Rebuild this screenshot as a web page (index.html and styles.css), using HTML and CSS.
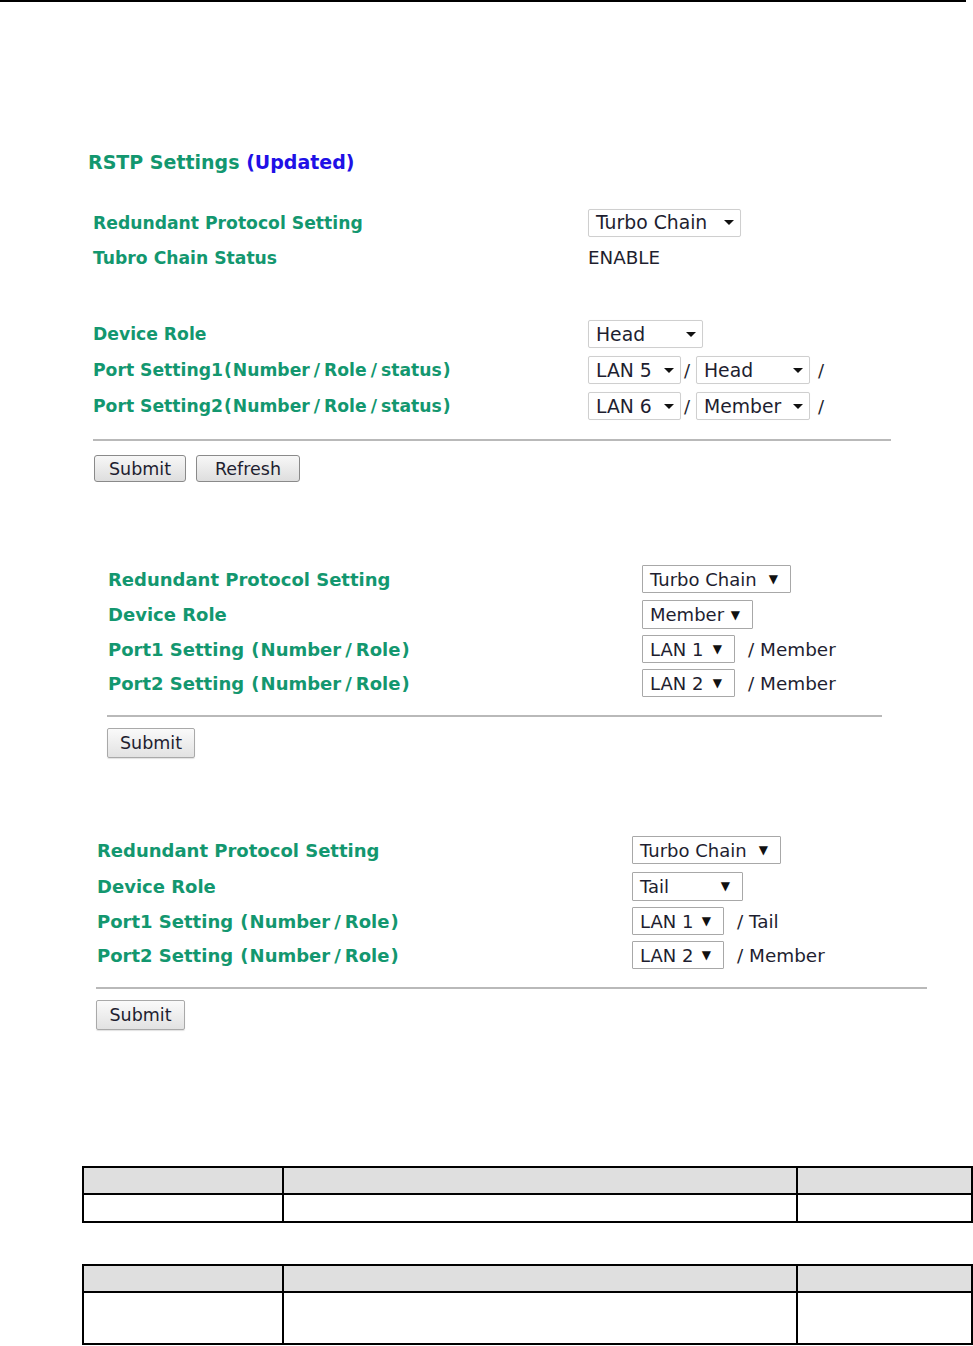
FILE: index.html
```html
<!DOCTYPE html>
<html>
<head>
<meta charset="utf-8">
<link rel="stylesheet" href="styles.css">
</head>
<body>
<div class="topline"></div>

<section class="s1">
  <h2 class="title">RSTP Settings <span class="upd">(Updated)</span></h2>
  <div class="grid g1">
    <div class="lbl">Redundant Protocol Setting</div>
    <div class="val"><span class="sel a w153">Turbo Chain<i class="caret"></i></span></div>
    <div class="lbl">Tubro Chain Status</div>
    <div class="val"><span class="plain">ENABLE</span></div>
    <div class="spacer"></div>
    <div class="spacer"></div>
    <div class="lbl">Device Role</div>
    <div class="val"><span class="sel a w115">Head<i class="caret"></i></span></div>
    <div class="lbl">Port Setting1<span class="pn">(</span>Number<span class="sl">/</span>Role<span class="sl">/</span>status<span class="pn">)</span></div>
    <div class="val"><span class="sel a w93">LAN 5<i class="caret"></i></span><span class="slash">/</span><span class="sel a w114">Head<i class="caret"></i></span><span class="slash s2">/</span></div>
    <div class="lbl">Port Setting2<span class="pn">(</span>Number<span class="sl">/</span>Role<span class="sl">/</span>status<span class="pn">)</span></div>
    <div class="val"><span class="sel a w93">LAN 6<i class="caret"></i></span><span class="slash">/</span><span class="sel a w114">Member<i class="caret"></i></span><span class="slash s2">/</span></div>
  </div>
  <div class="rule r1"></div>
  <div class="btns">
    <span class="btn b1 bw92">Submit</span>
    <span class="btn b1 bw104">Refresh</span>
  </div>
</section>

<section class="s2">
  <div class="grid g2">
    <div class="lbl big">Redundant Protocol Setting</div>
    <div class="val"><span class="sel b w149">Turbo Chain<span class="tri">▼</span></span></div>
    <div class="lbl big">Device Role</div>
    <div class="val"><span class="sel b w111 tall">Member<span class="tri">▼</span></span></div>
    <div class="lbl big">Port1 Setting <span class="pn">(</span>Number<span class="sl">/</span>Role<span class="pn">)</span></div>
    <div class="val"><span class="sel b w93">LAN 1<span class="tri">▼</span></span><span class="after">/ Member</span></div>
    <div class="lbl big">Port2 Setting <span class="pn">(</span>Number<span class="sl">/</span>Role<span class="pn">)</span></div>
    <div class="val"><span class="sel b w93">LAN 2<span class="tri">▼</span></span><span class="after">/ Member</span></div>
  </div>
  <div class="rule r2"></div>
  <div class="btns">
    <span class="btn b2 bw88">Submit</span>
  </div>
</section>

<section class="s3">
  <div class="grid g3">
    <div class="lbl big">Redundant Protocol Setting</div>
    <div class="val"><span class="sel b w149">Turbo Chain<span class="tri">▼</span></span></div>
    <div class="lbl big">Device Role</div>
    <div class="val"><span class="sel b w111 tall">Tail<span class="tri">▼</span></span></div>
    <div class="lbl big">Port1 Setting <span class="pn">(</span>Number<span class="sl">/</span>Role<span class="pn">)</span></div>
    <div class="val"><span class="sel b w92">LAN 1<span class="tri">▼</span></span><span class="after">/ Tail</span></div>
    <div class="lbl big">Port2 Setting <span class="pn">(</span>Number<span class="sl">/</span>Role<span class="pn">)</span></div>
    <div class="val"><span class="sel b w92">LAN 2<span class="tri">▼</span></span><span class="after">/ Member</span></div>
  </div>
  <div class="rule r3"></div>
  <div class="btns">
    <span class="btn b2 bw89">Submit</span>
  </div>
</section>

<table class="tbl t1">
  <tr class="head"><td class="c1"></td><td class="c2"></td><td class="c3"></td></tr>
  <tr class="body1"><td></td><td></td><td></td></tr>
</table>

<table class="tbl t2">
  <tr class="head"><td class="c1"></td><td class="c2"></td><td class="c3"></td></tr>
  <tr class="body2"><td></td><td></td><td></td></tr>
</table>
</body>
</html>
```

FILE: styles.css
```css
html, body {
  margin: 0;
  padding: 0;
  background: #fff;
}
body {
  font-family: "DejaVu Sans", Verdana, sans-serif;
  color: #1e1e2e;
  width: 973px;
  height: 1346px;
  overflow: hidden;
}
.topline {
  width: 966px;
  height: 2px;
  background: #000;
}

/* section 1 */
.s1 {
  padding-left: 88px;
}
.title {
  margin: 148px 0 0 0;
  height: 24px;
  line-height: 24px;
  font-size: 19px;
  font-weight: bold;
  color: #13976f;
}
.upd {
  color: #2010e6;
}
.grid {
  display: grid;
  align-items: center;
}
.g1 {
  margin: 31px 0 0 5px;
  grid-template-columns: 495px 1fr;
  grid-template-rows: 35px 35px 41px 36px 36px 36px;
}
.lbl {
  font-weight: bold;
  color: #13976f;
  font-size: 17.2px;
  white-space: nowrap;
}
.lbl.big {
  font-size: 18px;
}
.sl {
  padding: 0 4px;
}
.pn {
  padding: 0 1px;
}
.val {
  display: flex;
  align-items: center;
  white-space: nowrap;
}
.plain {
  font-size: 18.3px;
  color: #1e1e2e;
}
.sel {
  box-sizing: border-box;
  display: flex;
  align-items: center;
  justify-content: space-between;
  background: #fff;
  white-space: nowrap;
  color: #1e1e30;
}
.sel.a {
  height: 28px;
  border: 1px solid #cfcfcf;
  border-radius: 2px;
  padding: 0 6px 0 7px;
  font-size: 18.8px;
  box-shadow: 0 0 1px rgba(0,0,0,0.05);
}
.sel.b {
  height: 28px;
  border: 1px solid #a8a8a8;
  border-radius: 1px;
  padding: 0 12px 0 7px;
  font-size: 18px;
}
.sel.b.tall {
  height: 29px;
}
.caret {
  display: block;
  width: 0;
  height: 0;
  border-left: 5.5px solid transparent;
  border-right: 5.5px solid transparent;
  border-top: 5px solid #111;
}
.tri {
  font-size: 12px;
  color: #111;
  font-family: "DejaVu Sans", sans-serif;
}
.w153 { width: 153px; }
.w149 { width: 149px; }
.w115 { width: 115px; }
.w114 { width: 114px; }
.w111 { width: 111px; }
.w93 { width: 93px; }
.w92 { width: 92px; }
.slash {
  font-size: 18px;
  width: 15px;
  text-align: left;
  padding-left: 3px;
  box-sizing: border-box;
}
.slash.s2 {
  padding-left: 8px;
}
.after {
  font-size: 18.4px;
  margin-left: 13px;
  color: #1e1e30;
}

.rule {
  height: 2px;
  background: #b9b9b9;
}
.r1 {
  margin: 15px 0 0 5px;
  width: 798px;
}
.btns {
  display: flex;
  gap: 10px;
}
.s1 .btns {
  margin: 14px 0 0 6px;
}
.btn {
  box-sizing: border-box;
  display: flex;
  align-items: center;
  justify-content: center;
  color: #1e1e30;
  font-size: 17.5px;
}
.b1 {
  height: 27px;
  border: 1px solid #8a8a8a;
  border-radius: 3px;
  background: linear-gradient(#f7f7f7, #dedede);
}
.b2 {
  height: 30px;
  border: 1px solid #a9a9a9;
  border-radius: 2px;
  background: linear-gradient(#fafafa, #e2e2e2);
  box-shadow: 0 1px 1px rgba(0,0,0,0.12);
}
.bw92 { width: 92px; }
.bw104 { width: 104px; }
.bw88 { width: 88px; }
.bw89 { width: 89px; }

/* section 2 */
.s2 {
  padding-left: 107px;
}
.g2 {
  margin: 79px 0 0 1px;
  grid-template-columns: 534px 1fr;
  grid-template-rows: 36px 35px 34px 34px;
}
.r2 {
  margin: 15px 0 0 0;
  width: 775px;
}
.s2 .btns {
  margin: 11px 0 0 0;
}

/* section 3 */
.s3 {
  padding-left: 96px;
}
.g3 {
  margin: 74px 0 0 1px;
  grid-template-columns: 535px 1fr;
  grid-template-rows: 36px 36px 34px 34px;
}
.r3 {
  margin: 15px 0 0 0;
  width: 831px;
}
.s3 .btns {
  margin: 11px 0 0 0;
}

/* tables */
.tbl {
  border-collapse: collapse;
  margin-left: 82px;
  width: 891px;
}
.tbl td {
  border: 2px solid #000;
  padding: 0;
}
.t1 {
  margin-top: 136px;
}
.t2 {
  margin-top: 41px;
}
.head td {
  background: #dfdfdf;
  height: 25px;
}
.body1 td {
  height: 26px;
}
.body2 td {
  height: 50px;
}
.c1 { width: 198px; }
.c2 { width: 512px; }
```
